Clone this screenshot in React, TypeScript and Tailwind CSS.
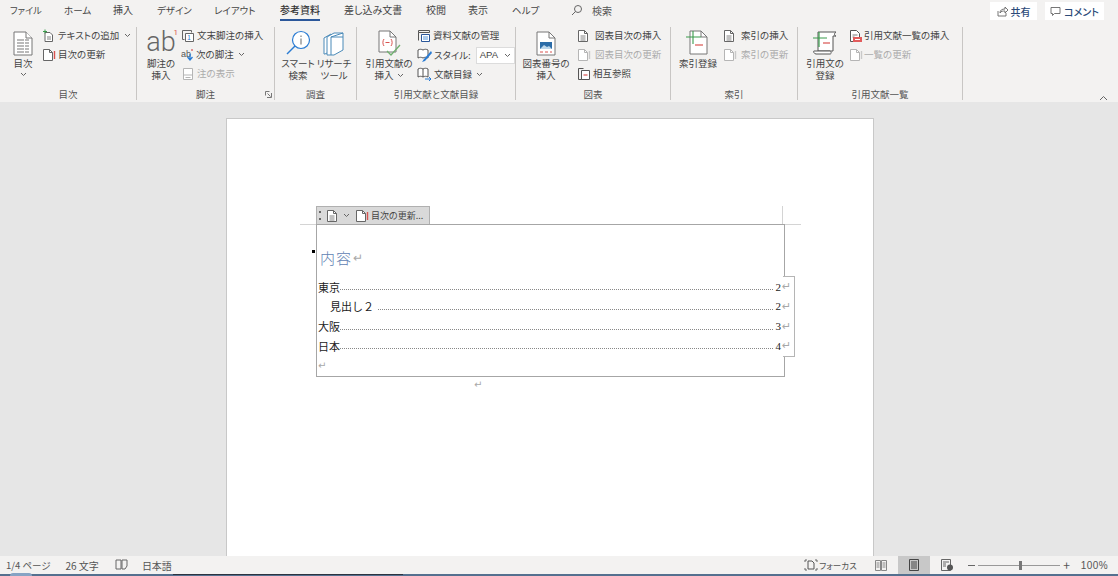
import type { ReactNode } from "react"

const tabs = [
  { label: "ファイル", w: "w-[54px]", size: "text-[9.2px]" },
  { label: "ホーム", w: "w-[49px]", size: "text-[9.5px]" },
  { label: "挿入", w: "w-[44px]", size: "text-[10px]" },
  { label: "デザイン", w: "w-[57px]", size: "text-[9.5px]" },
  { label: "レイアウト", w: "w-[66px]", size: "text-[9.5px]" },
  { label: "参考資料", w: "w-[64px]", size: "text-[10px]", active: true },
  { label: "差し込み文書", w: "w-[82px]", size: "text-[10px]" },
  { label: "校閲", w: "w-[42px]", size: "text-[10px]" },
  { label: "表示", w: "w-[44px]", size: "text-[10px]" },
  { label: "ヘルプ", w: "w-[60px]", size: "text-[9.5px]" },
]

const tocRows = [
  { label: "東京", page: "2", indent: false },
  { label: "見出し２", page: "2", indent: true },
  { label: "大阪", page: "3", indent: false },
  { label: "日本", page: "4", indent: false },
]

function Chevron({ className = "" }: { className?: string }) {
  return (
    <svg width="7" height="5" viewBox="0 0 7 5" className={className}>
      <path d="M1 1l2.5 2.5L6 1" fill="none" stroke="#666" strokeWidth="1" />
    </svg>
  )
}

// small page glyph used by most of the ribbon's little buttons
function Page({ color = "#666", lines = true, bar }: { color?: string; lines?: boolean; bar?: string }) {
  return (
    <svg width="14" height="14" viewBox="0 0 14 14">
      <path d="M1.5 1.5h6l3 3v8h-9z" fill="#fff" stroke={color} />
      <path d="M7.5 1.5v3h3" fill="none" stroke={color} />
      {lines && <path d="M3.5 7h5M3.5 9h5M3.5 11h5" stroke={color} strokeWidth="0.8" />}
      {bar && <path d="M12.5 3v8" stroke={bar} strokeWidth="1.4" />}
    </svg>
  )
}

function TextAddIcon() {
  return (
    <svg width="14" height="14" viewBox="0 0 14 14">
      <path d="M3 3.5h5l2.5 2.5v6.5H3z" fill="#fff" stroke="#666" />
      <path d="M5 8h4M5 10h4" stroke="#666" strokeWidth="0.8" />
      <path d="M3 0.5v4M1 2.5h4" stroke="#3a9b4c" />
    </svg>
  )
}

function EndnoteIcon() {
  return (
    <svg width="14" height="14" viewBox="0 0 14 14">
      <path d="M1.5 1.5h9v2M1.5 1.5v9h2" fill="none" stroke="#666" />
      <path d="M4.5 4.5h8v8h-8z" fill="#fff" stroke="#666" />
      <text x="6" y="11" fontSize="7" fill="#2b7cd3">1</text>
    </svg>
  )
}

function NextNoteIcon() {
  return (
    <svg width="14" height="14" viewBox="0 0 14 14">
      <text x="0" y="9" fontSize="9" fill="#555" fontFamily="Liberation Sans">ab</text>
      <path d="M11 1v2" stroke="#c33" />
      <path d="M9 6v5M6.5 9L9 12l2.5-3" fill="none" stroke="#2b7cd3" strokeWidth="1.3" />
    </svg>
  )
}

function ShowNoteIcon() {
  return (
    <svg width="14" height="14" viewBox="0 0 14 14">
      <path d="M2.5 1.5h9v11h-9z" fill="#fff" stroke="#b5b5b5" />
      <path d="M2.5 8h9M4.5 10.5h5" stroke="#b5b5b5" />
    </svg>
  )
}

function ManageIcon() {
  return (
    <svg width="14" height="14" viewBox="0 0 14 14">
      <path d="M1.5 1.5h11v2h-11zM1.5 3.5v8" fill="none" stroke="#555" />
      <path d="M4.5 5.5h8v7h-8z" fill="#fff" stroke="#2b579a" />
      <path d="M6 8h5M6 10h5" stroke="#2b7cd3" strokeWidth="0.8" />
    </svg>
  )
}

function StyleIcon() {
  return (
    <svg width="16" height="15" viewBox="0 0 16 15">
      <path d="M1 2c2-1 3-1 5 0 2-1 3-1 5 0v8c-2-1-3-1-5 0-2-1-3-1-5 0z" fill="#fff" stroke="#555" />
      <path d="M14 3L7 11l-2 3 3-1 7-8z" fill="#2b7cd3" />
    </svg>
  )
}

function BiblioIcon() {
  return (
    <svg width="16" height="15" viewBox="0 0 16 15">
      <path d="M1 2c2-1 3-1 5 0 2-1 3-1 5 0v8c-2-1-3-1-5 0-2-1-3-1-5 0z" fill="#fff" stroke="#555" />
      <path d="M6 2v8" stroke="#555" />
      <path d="M8 12h6M12 10l2 2-2 2" fill="none" stroke="#2b7cd3" />
    </svg>
  )
}

function CrossRefIcon() {
  return (
    <svg width="14" height="14" viewBox="0 0 14 14">
      <path d="M1.5 1.5h5M1.5 1.5v11h5" fill="none" stroke="#555" />
      <path d="M4.5 3.5h8v9h-8z" fill="#fff" stroke="#555" />
      <path d="M6.5 8h4" stroke="#d9534f" strokeWidth="1.2" />
    </svg>
  )
}

function BiblioListIcon() {
  return (
    <svg width="14" height="14" viewBox="0 0 14 14">
      <path d="M1.5 1.5h6l3 3v8h-9z" fill="#fff" stroke="#555" />
      <path d="M3.5 6h5M3.5 8h2" stroke="#555" strokeWidth="0.8" />
      <path d="M4 8h9v5H4z" fill="#e25c5c" />
      <path d="M6 10.5h5" stroke="#fff" />
    </svg>
  )
}

function TocBigIcon() {
  return (
    <svg width="20" height="25" viewBox="0 0 20 25">
      <path d="M1 1h12l6 6v17H1z" fill="#fff" stroke="#777" />
      <path d="M13 1v6h6" fill="#fff" stroke="#777" />
      <path d="M4 9h12M4 12h12M4 15h12M4 18h12M4 21h12" stroke="#777" strokeWidth="1.1" strokeDasharray="7 1 4 0" />
    </svg>
  )
}

function LookupIcon() {
  return (
    <svg width="26" height="26" viewBox="0 0 26 26">
      <circle cx="16" cy="10" r="8.5" fill="#fff" stroke="#2b7cd3" strokeWidth="1.2" />
      <path d="M10 16L2 24" stroke="#2b7cd3" strokeWidth="1.4" />
      <path d="M16 8.5v6M16 5.5v1.5" stroke="#666" />
    </svg>
  )
}

function ResearchIcon() {
  return (
    <svg width="22" height="24" viewBox="0 0 22 24">
      <path d="M1 6l7-4v17l-6 3H1z" fill="#fff" stroke="#4a8ab8" />
      <path d="M4 5l7-4h9v17l-9 5H4z" fill="#fff" stroke="#4a8ab8" />
      <path d="M8 5h12M8 5v18M20 1L8 5" fill="none" stroke="#4a8ab8" />
    </svg>
  )
}

function CitationIcon() {
  return (
    <svg width="24" height="26" viewBox="0 0 24 26">
      <path d="M2 1h11l6 6v15H2z" fill="#fff" stroke="#777" />
      <path d="M13 1v6h6" fill="none" stroke="#777" />
      <path d="M7 9c-1.500 2-1.500 5 0 7M14 9c1.500 2 1.500 5 0 7M8.500 12.500h4" fill="none" stroke="#d9534f" />
      <path d="M10 21l4 4 9-10" fill="none" stroke="#6fb06f" strokeWidth="1.3" />
    </svg>
  )
}

function CaptionIcon() {
  return (
    <svg width="20" height="25" viewBox="0 0 20 25">
      <path d="M1 1h12l6 6v17H1z" fill="#fff" stroke="#777" />
      <path d="M13 1v6h6" fill="none" stroke="#777" />
      <path d="M4 11h12v7H4z" fill="#2b6ca8" />
      <path d="M4 18l4-4 3 2 2-1 3 3z" fill="#bcd6ea" />
      <path d="M4 21h3M9 21h3M14 21h2" stroke="#d9534f" />
    </svg>
  )
}

function IndexIcon() {
  return (
    <svg width="26" height="26" viewBox="0 0 26 26">
      <path d="M5 1h11l6 6v17H5z" fill="#fff" stroke="#777" />
      <path d="M16 1v6h6" fill="none" stroke="#777" />
      <path d="M1 7h15M8 1v13" stroke="#3a9b4c" strokeWidth="1.1" />
      <path d="M10 15h8" stroke="#d9534f" strokeWidth="1.2" />
    </svg>
  )
}

function ScrollIcon() {
  return (
    <svg width="26" height="26" viewBox="0 0 26 26">
      <path d="M6 2h18c-2 1-2 4 0 4h-3v15H6z" fill="#fff" stroke="#555" />
      <path d="M2 21h16c1 0 2 3 0 3H4c-2 0-3-3-2-3z" fill="#fff" stroke="#555" />
      <path d="M1 8h14M7 2v15" stroke="#3a9b4c" strokeWidth="1.2" />
      <path d="M11 13h7" stroke="#d9534f" strokeWidth="1.2" />
    </svg>
  )
}

function Group({ w, label, children, launcher }: { w: string; label: string; children: ReactNode; launcher?: boolean }) {
  return (
    <div className={`relative flex h-[73px] flex-col border-r border-[#c8c6c4] ${w}`}>
      <div className="flex h-[62px]">{children}</div>
      <div className="text-center text-[9.5px] leading-[12px] text-[#555]">{label}</div>
      {launcher && (
        <svg width="7" height="7" viewBox="0 0 7 7" className="absolute bottom-[2px] right-[2px]">
          <path d="M.5.500h4M.5.500v4M6.500 2v4.500H2M2.500 2.500l3 3" fill="none" stroke="#777" />
        </svg>
      )}
    </div>
  )
}

function Big({ icon, lines, w, chevron, inlineChevron }: { icon: ReactNode; lines: string[]; w: string; chevron?: boolean; inlineChevron?: boolean }) {
  return (
    <div className={`flex shrink-0 flex-col items-center ${w}`}>
      <div className="flex h-[30px] items-end justify-center pb-[1px]">{icon}</div>
      {lines.map((line, i) => (
        <div key={i} className="flex items-center gap-[3px] whitespace-nowrap text-[9.5px] leading-[12px] text-[#444]">
          {line}
          {inlineChevron && i === lines.length - 1 && <Chevron />}
        </div>
      ))}
      {chevron && <Chevron className="mt-[3px]" />}
    </div>
  )
}

function Small({ icon, label, off, chevron, gap = "gap-[2px]" }: { icon: ReactNode; label: string; off?: boolean; chevron?: boolean; gap?: string }) {
  return (
    <div className={`flex h-[19px] items-center whitespace-nowrap text-[9.5px] ${gap} ${off ? "text-[#ababab]" : "text-[#444]"}`}>
      {icon}
      <span>{label}</span>
      {chevron && <Chevron className="ml-[3px]" />}
    </div>
  )
}

function Col({ ml, children }: { ml: string; children: ReactNode }) {
  return <div className={`-mt-px flex flex-col ${ml}`}>{children}</div>
}

function Mark({ className = "" }: { className?: string }) {
  return <span className={`font-['DejaVu_Sans',sans-serif] leading-none text-[#a8a8a8] ${className}`}>↵</span>
}

export default function App() {
  return (
    <div className="flex h-[576px] w-[1118px] flex-col overflow-hidden bg-[#f3f2f1] font-['Noto_Sans_CJK_JP','Liberation_Sans',sans-serif] [font-feature-settings:'palt']">
      {/* Tabs */}
      <div className="flex h-[27px] shrink-0 pl-[10px]">
        {tabs.map((tab) => (
          <div key={tab.label} className={`flex h-[21px] shrink-0 items-start ${tab.w}`}>
            <div className={`h-[21px] whitespace-nowrap leading-[20px] ${tab.size} ${tab.active ? "border-b-2 border-[#2b579a] font-medium text-[#333]" : "text-[#444]"}`}>
              {tab.label}
            </div>
          </div>
        ))}
        <div className="-ml-[2px] flex h-[21px] items-center gap-[9px] text-[10px] text-[#555]">
          <svg width="13" height="13" viewBox="0 0 13 13">
            <circle cx="8" cy="5" r="3.500" fill="none" stroke="#666" />
            <path d="M5.500 7.500L2 11" stroke="#666" />
          </svg>
          <span>検索</span>
        </div>
        <div className="ml-auto mr-[14px] mt-[2px] flex h-[18px] gap-[8px] text-[10px] font-medium text-[#2b4a78]">
          <div className="flex w-[47px] items-center justify-center gap-[3px] bg-white">
            <svg width="11" height="11" viewBox="0 0 11 11">
              <path d="M1 5v5h8V7M3 7c0-3 2-4 5-4V1l3 3-3 3V5C6 5 4 5 3 7z" fill="none" stroke="#666" strokeWidth="0.9" />
            </svg>
            共有
          </div>
          <div className="flex w-[59px] items-center justify-center gap-[3px] bg-white">
            <svg width="11" height="11" viewBox="0 0 11 11">
              <path d="M1 1.500h9v6H4.500L2.500 9.500v-2H1z" fill="none" stroke="#666" strokeWidth="0.9" />
            </svg>
            コメント
          </div>
        </div>
      </div>

      {/* Ribbon */}
      <div className="relative flex h-[75px] shrink-0">
        <Group w="w-[137px]" label="目次">
          <Big w="w-[34px] ml-[6px]" icon={<TocBigIcon />} lines={["目次"]} chevron />
          <Col ml="ml-[2px]">
            <Small icon={<TextAddIcon />} label="テキストの追加" chevron />
            <Small icon={<Page lines={false} bar="#d9534f" />} label="目次の更新" />
          </Col>
        </Group>
        <Group w="w-[138px]" label="脚注" launcher>
          <Big
            w="w-[42px] ml-[3px]"
            icon={
              <div className="relative mb-[2px] h-[24px] w-[30px] text-center font-['Roboto',sans-serif] text-[27px] font-light leading-[24px] text-[#666]">
                ab
                <span className="absolute -right-[2px] -top-[2px] text-[8px] font-normal leading-[10px] text-[#d9534f]">1</span>
              </div>
            }
            lines={["脚注の", "挿入"]}
          />
          <Col ml="-ml-[1px]">
            <Small icon={<EndnoteIcon />} label="文末脚注の挿入" />
            <Small icon={<NextNoteIcon />} label="次の脚注" chevron gap="gap-[1px]" />
            <Small icon={<ShowNoteIcon />} label="注の表示" off />
          </Col>
        </Group>
        <Group w="w-[82px]" label="調査">
          <Big w="w-[40px] ml-[3px]" icon={<LookupIcon />} lines={["スマート", "検索"]} />
          <Big w="w-[32px]" icon={<ResearchIcon />} lines={["リサーチ", "ツール"]} />
        </Group>
        <Group w="w-[159px]" label="引用文献と文献目録">
          <Big w="w-[56px] ml-[4px]" icon={<CitationIcon />} lines={["引用文献の", "挿入"]} inlineChevron />
          <Col ml="">
            <Small icon={<ManageIcon />} label="資料文献の管理" />
            <div className="flex h-[20px] items-center gap-[1px] whitespace-nowrap text-[9.5px] text-[#444]">
              <StyleIcon />
              <span>スタイル:</span>
              <div className="ml-[4px] flex h-[17px] w-[39px] items-center justify-between border border-[#dcdcdc] bg-white pl-[3px] pr-[3px] font-['Liberation_Sans',sans-serif]">
                APA
                <Chevron />
              </div>
            </div>
            <Small icon={<BiblioIcon />} label="文献目録" chevron gap="gap-[1px]" />
          </Col>
        </Group>
        <Group w="w-[155px]" label="図表">
          <Big w="w-[58px] ml-[1px]" icon={<CaptionIcon />} lines={["図表番号の", "挿入"]} />
          <Col ml="ml-[2px]">
            <Small icon={<Page />} label="図表目次の挿入" gap="gap-[4px]" />
            <Small icon={<Page color="#b5b5b5" lines={false} bar="#c9c9c9" />} label="図表目次の更新" off gap="gap-[4px]" />
            <Small icon={<CrossRefIcon />} label="相互参照" />
          </Col>
        </Group>
        <Group w="w-[127px]" label="索引">
          <Big w="w-[48px] ml-[3px]" icon={<IndexIcon />} lines={["索引登録"]} />
          <Col ml="ml-[1px]">
            <Small icon={<Page />} label="索引の挿入" gap="gap-[4px]" />
            <Small icon={<Page color="#b5b5b5" lines={false} bar="#c9c9c9" />} label="索引の更新" off gap="gap-[4px]" />
          </Col>
        </Group>
        <Group w="w-[165px]" label="引用文献一覧">
          <Big w="w-[48px] ml-[3px]" icon={<ScrollIcon />} lines={["引用文の", "登録"]} />
          <Col ml="">
            <Small icon={<BiblioListIcon />} label="引用文献一覧の挿入" gap="gap-[1px]" />
            <Small icon={<Page color="#b5b5b5" lines={false} bar="#c9c9c9" />} label="一覧の更新" off gap="gap-[1px]" />
          </Col>
        </Group>
        <svg width="9" height="6" viewBox="0 0 9 6" className="absolute bottom-[1px] right-[10px]">
          <path d="M1 5l3.500-3.500L8 5" fill="none" stroke="#666" />
        </svg>
      </div>

      {/* Document area */}
      <div className="min-h-0 flex-1 overflow-hidden bg-[#e6e6e6] pl-[226px] pr-[5px] pt-[16px]">
        <div className="h-[460px] w-[648px] border border-[#c8c8c8] bg-white pl-[89px] pt-[87px]">
          <div className="relative w-[469px]">
            {/* crop guides around the block */}
            <div className="absolute -left-[16px] top-[18px] h-px w-[501px] bg-[#d4d4d4]" />
            <div className="absolute left-[466px] top-0 h-[18px] w-px bg-[#d4d4d4]" />

            <div className="relative flex h-[18px] w-[114px] items-center border border-b-0 border-[#b0b0b0] bg-[#d9d9d9] pl-[2px] text-[9px] text-[#444]">
              <span className="h-[9px] w-[2px] border-y-2 border-[#666] bg-[#d9d9d9]" />
              <span className="ml-[5px] flex"><Page /></span>
              <Chevron className="ml-[3px]" />
              <span className="ml-[5px] flex"><Page lines={false} bar="#d9534f" /></span>
              <span className="ml-[2px] whitespace-nowrap">目次の更新...</span>
            </div>

            <div className="relative h-[153px] w-[469px] border border-[#a6a6a6] bg-white">
              <div className="absolute -left-[5px] top-[25px] h-[3px] w-[3px] bg-black" />
              <div className="ml-[3px] mt-[23px] flex h-[20px] items-center gap-px text-[15px] font-light tracking-[1px] text-[#5f82b3]">
                内容
                <Mark className="text-[12px]" />
              </div>
              <div className="absolute -right-[11px] top-[51px] h-[81px] w-[12px] border border-l-0 border-[#b5b5b5] bg-white" />
              <div className="relative mt-[9px] w-[473px] [font-feature-settings:normal]">
                {tocRows.map((row) => (
                  <div key={row.label} className={`flex h-[19.7px] items-center text-[11px] text-[#222] ${row.indent ? "pl-[13px]" : "pl-px"}`}>
                    <span className={`whitespace-nowrap ${row.indent ? "mr-[4px]" : ""}`}>{row.label}</span>
                    <span className="mt-[6px] flex-1 border-b border-dotted border-[#888]" />
                    <span className="ml-[3px] font-['Liberation_Serif',serif]">{row.page}</span>
                    <Mark className="ml-px w-[8px] text-[11px]" />
                  </div>
                ))}
                <div className="flex h-[20px] items-center pl-px">
                  <Mark className="text-[10px]" />
                </div>
              </div>
            </div>
            <Mark className="ml-[158px] mt-[3px] block text-[10px]" />
          </div>
        </div>
      </div>

      {/* Status bar */}
      <div className="flex h-[18px] shrink-0 items-center text-[10px] text-[#555]">
        <span className="ml-[6px] whitespace-nowrap text-[9.5px]">1/4 ページ</span>
        <span className="ml-[15px] whitespace-nowrap">26 文字</span>
        <svg width="13" height="12" viewBox="0 0 13 12" className="ml-[16px]">
          <path d="M1 1h5v9H1zM7 1h5v6l-2 3H7z" fill="none" stroke="#666" />
        </svg>
        <span className="ml-[14px]">日本語</span>
        <div className="ml-auto flex h-full items-center">
          <svg width="14" height="12" viewBox="0 0 14 12">
            <path d="M1 3V1h2M11 1h2v2M1 9v2h2M11 11h2V9" fill="none" stroke="#666" />
            <path d="M4 2h4l2 2v6H4z" fill="none" stroke="#555" />
          </svg>
          <span className="ml-px w-[56px] whitespace-nowrap text-[8.5px]">フォーカス</span>
          <svg width="12" height="11" viewBox="0 0 12 11">
            <path d="M.5.500h5v10h-5zM6.500.500h5v10h-5z" fill="none" stroke="#888" />
            <path d="M1.500 3h3M1.500 5h3M1.500 7h3M7.500 3h3M7.500 5h3M7.500 7h3" stroke="#888" />
          </svg>
          <div className="ml-[11px] flex h-full w-[32px] items-center justify-center bg-[#c8c8c8]">
            <svg width="10" height="12" viewBox="0 0 10 12">
              <path d="M.5.500h9v11h-9z" fill="none" stroke="#444" />
              <path d="M2 3h6M2 5h6M2 7h6M2 9h6" stroke="#444" />
            </svg>
          </div>
          <svg width="13" height="12" viewBox="0 0 13 12" className="ml-[11px]">
            <path d="M.5.500h9v11h-9z" fill="none" stroke="#666" />
            <path d="M2 3h6M2 5h3M2 7h3" stroke="#666" />
            <circle cx="9" cy="8.500" r="3" fill="#555" />
          </svg>
          <span className="ml-[14px] h-px w-[7px] bg-[#666]" />
          <div className="relative ml-[3px] h-px w-[82px] bg-[#999]">
            <span className="absolute -top-[4px] left-[41px] h-[9px] w-[3px] bg-[#777]" />
          </div>
          <span className="ml-[3px] text-[12px] leading-none">+</span>
          <span className="ml-[11px] mr-[10px] font-['Liberation_Sans',sans-serif] text-[10px] tracking-[0.4px]">100%</span>
        </div>
      </div>
      <div className="relative h-[2px] shrink-0 bg-[#54708f]">
        <div className="absolute left-[10px] -top-[1px] h-[6px] w-[22px] rounded-full bg-[#86a3c4]" />
        <div className="absolute left-[173px] top-0 h-[1px] w-[230px] bg-[#2c3340]" />
      </div>
    </div>
  )
}
